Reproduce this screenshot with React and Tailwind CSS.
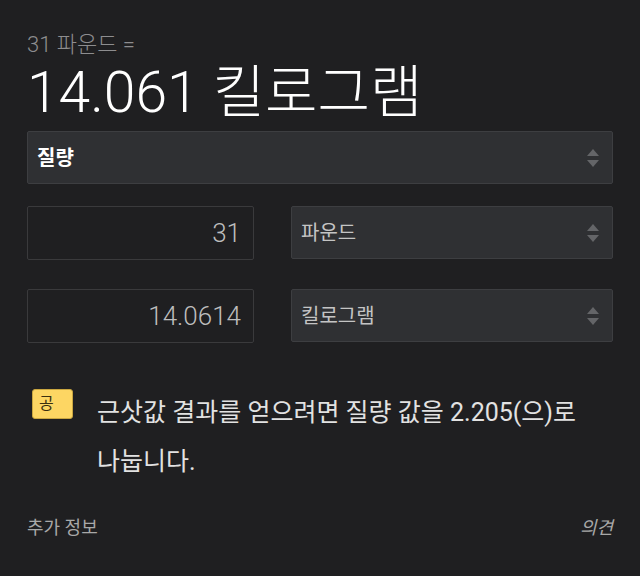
import React from 'react'

const FONT = { fontFamily: 'Roboto, "Noto Sans CJK KR", sans-serif' }

function Arrows() {
    return (
        <svg width="14" height="20" viewBox="0 0 14 20" className="text-[#646568]" fill="currentColor">
            <path d="M7 1 L13 8 H1 Z" />
            <path d="M7 19 L13 12 H1 Z" />
        </svg>
    )
}

function Select({ label, bold }) {
    return (
        <div className="flex-1 h-[53px] flex items-center justify-between pl-[9px] pr-[12px] bg-[#2f3033] border border-[#3d3e41] rounded-[2px]">
            <span className={bold ? 'text-[20px] text-white font-bold' : 'text-[20px] text-[#c4c4c4]'}>{label}</span>
            <Arrows />
        </div>
    )
}

function Input({ value }) {
    return (
        <div className="w-[227px] h-[54px] flex items-center justify-end pr-[12px] border border-[#3a3a3c] rounded-[2px] bg-[#1f1f21]">
            <span className="text-[26px] text-[#bdbdbd] font-light">{value}</span>
        </div>
    )
}

export default function App() {
    return (
        <div className="w-[640px] h-[576px] bg-[#1f1f21] px-[27px] pt-[29px]" style={FONT}>
            <div className="text-[22px] leading-[31px] text-[#8d8d8f] font-light">31 파운드 =</div>
            <div className="text-[57px] leading-[64px] text-white font-light mt-[1px]">14.061 킬로그램</div>

            <div className="mt-[6px] flex">
                <Select label="질량" bold />
            </div>

            <div className="mt-[22px] flex gap-[37px]">
                <Input value="31" />
                <Select label="파운드" />
            </div>
            <div className="mt-[29px] flex gap-[37px]">
                <Input value="14.0614" />
                <Select label="킬로그램" />
            </div>

            <div className="mt-[46px] flex pl-[5px]">
                <div className="shrink-0 w-[41px] h-[30px] rounded-[3px] bg-[#fdd663] border border-[#c9a640] text-[#3a2f10] text-[16px] leading-[28px] pl-[6px]">공</div>
                <p className="ml-[24px] text-[25px] leading-[49px] text-[#e2e2e2] -mt-[1px] break-keep">
                    근삿값 결과를 얻으려면 질량 값을 2.205(으)로 나눕니다.
                </p>
            </div>

            <div className="mt-[28px] flex justify-between text-[18px] text-[#a8a8a8]">
                <span>추가 정보</span>
                <span className="italic">의견</span>
            </div>
        </div>
    )
}
